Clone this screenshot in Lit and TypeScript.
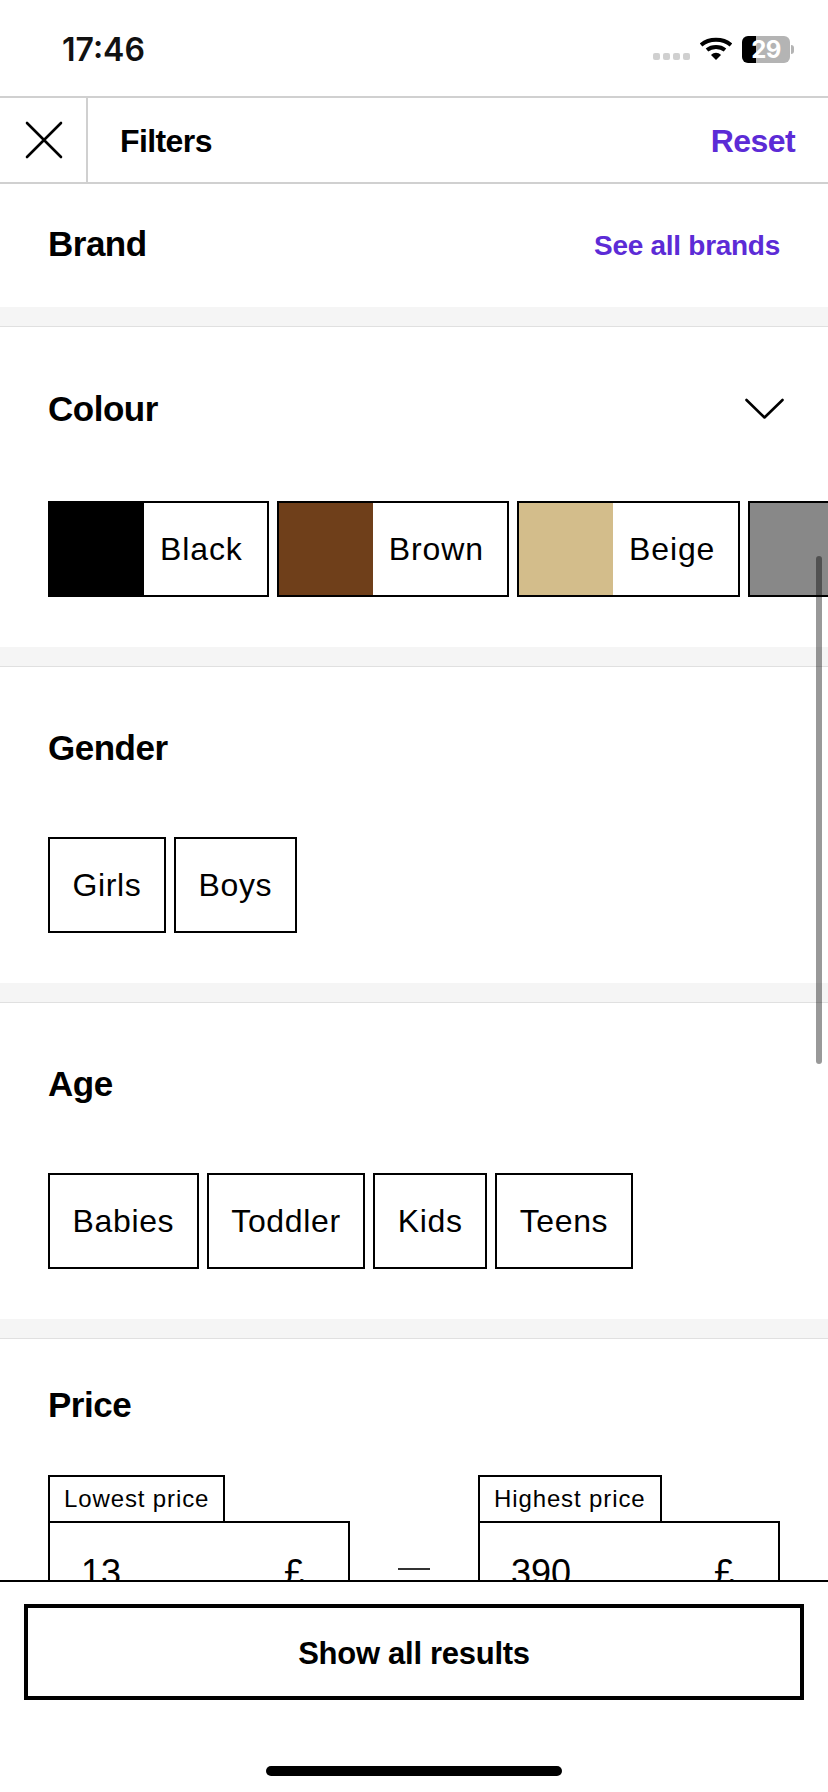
import { LitElement, html, css } from "lit";
import { customElement } from "lit/decorators.js";

const colours = [
  ["Black", "#000000"],
  ["Brown", "#6f3f1a"],
  ["Beige", "#d3bd8b"],
  ["", "#888888"],
];

@customElement("app-root")
export class AppRoot extends LitElement {
  static styles = css`
    :host {
      display: block;
      width: 828px;
      height: 1792px;
      background: #fff;
      color: #000;
      font-family: "Liberation Sans", Arial, sans-serif;
      position: relative;
      overflow: hidden;
    }
    .page { display: flex; flex-direction: column; height: 1792px; }
    .status {
      height: 96px;
      flex: none;
      display: flex;
      align-items: center;
      justify-content: space-between;
      padding: 2px 34px 0 62px;
      box-sizing: border-box;
    }
    .time { font: 600 32px/1 Inter, sans-serif; letter-spacing: 0; color: #111; padding-top: 2px; }
    .status-icons { display: flex; align-items: center; gap: 10px; }
    .sig { display: flex; gap: 3px; margin-top: 14px; margin-left: 1px; }
    .sig i { width: 7px; height: 7px; border-radius: 2px; background: #d0d0d0; display: block; }
    .batt { display: flex; align-items: center; gap: 1px; }
    .batt-body {
      width: 48px; height: 27px; border-radius: 6px; overflow: hidden;
      background: linear-gradient(90deg, #000 0 14px, #b4b4b4 14px);
      color: #fff; font: 700 24px/27px Inter, sans-serif; text-align: center;
      letter-spacing: -0.5px;
    }
    .batt-tip { width: 3px; height: 9px; background: #b4b4b4; border-radius: 0 3px 3px 0; }
    .header {
      height: 88px;
      flex: none;
      box-sizing: border-box;
      border-top: 2px solid #d0d0d0;
      border-bottom: 2px solid #d0d0d0;
      display: flex;
      align-items: center;
    }
    .close {
      width: 88px; height: 100%; box-sizing: border-box;
      border-right: 2px solid #d0d0d0;
      display: flex; align-items: center; justify-content: center;
      padding-left: 2px;
    }
    .title {
      font-size: 32px; font-weight: 700; margin-left: 32px; flex: 1;
      letter-spacing: -0.6px; padding-top: 3px;
    }
    .reset {
      font-size: 32px; font-weight: 700; color: #5c2bd6; margin-right: 33px;
      letter-spacing: -0.6px; padding-top: 3px;
    }
    .scroll { flex: 1; min-height: 0; overflow: hidden; }
    .section { background: #fff; padding: 0 48px; }
    .band { height: 20px; background: #f5f5f5; border-bottom: 1px solid #e0e0e0; box-sizing: border-box; }
    h2 { margin: 0; font-size: 35px; font-weight: 700; letter-spacing: -0.5px; line-height: 40px; }
    .brand {
      height: 123px; display: flex; align-items: center; justify-content: space-between;
      padding-bottom: 4px; box-sizing: border-box;
    }
    .see { font-size: 28px; font-weight: 700; color: #5c2bd6; margin-top: 4px; letter-spacing: -0.28px; }
    .filter { height: 316px; padding-top: 61px; box-sizing: border-box; }
    .filter.colour { height: 320px; padding-top: 62px; }
    .filter.colour .chips { margin-top: 72px; }
    .filter-head { display: flex; align-items: center; justify-content: space-between; height: 40px; }
    .chevron { margin-right: -5px; }
    .chips { display: flex; gap: 8px; margin-top: 69px; margin-right: -48px; }
    .chip {
      height: 96px; box-sizing: border-box; border: 2px solid #000; flex: none;
      display: flex; align-items: center; padding: 1px 22.5px 0; font-size: 32px; letter-spacing: 0.65px;
    }
    .swatch { padding: 1px 23px 0 0; letter-spacing: 0.9px; }
    .swatch .block { width: 94px; height: 92px; margin: -1px 16px 0 0; }
    .swatch.first { padding-right: 24px; }
    .swatch.first .block { margin-left: -2px; width: 96px; height: 96px; }
    .price { padding-top: 46px; }
    .price-row { display: flex; align-items: flex-start; margin-top: 50px; }
    .field { width: 302px; flex: none; display: flex; flex-direction: column; align-items: flex-start; }
    .label {
      height: 46px; box-sizing: border-box; border: 2px solid #000; border-bottom: none;
      display: flex; align-items: center; padding: 0 14px; font-size: 24px; letter-spacing: 0.88px;
    }
    .input {
      width: 100%; height: 96px; box-sizing: border-box; border: 2px solid #000;
      display: flex; align-items: center; justify-content: space-between;
      padding: 8px 44px 0 31px; font-size: 36px;
    }
    .dash { width: 32px; height: 2px; background: #333; margin: 93px 48px 0; flex: none; }
    .footer {
      height: 212px; flex: none; box-sizing: border-box;
      border-top: 2px solid #000; background: #fff;
      padding: 22px 24px 0;
      position: relative;
    }
    .cta {
      height: 96px; box-sizing: border-box; border: 4px solid #000;
      display: flex; align-items: center; justify-content: center;
      font-size: 31px; font-weight: 700; letter-spacing: -0.28px; padding-top: 4px;
    }
    .home {
      position: absolute; left: 266px; top: 184px; width: 296px; height: 10px;
      border-radius: 5px; background: #000;
    }
    .scrollbar {
      position: absolute; left: 816px; top: 556px; width: 6px; height: 508px;
      border-radius: 3px; background: rgba(0, 0, 0, 0.4);
    }
  `;

  private chips(items: string[]) {
    return html`<div class="chips">${items.map((t) => html`<div class="chip">${t}</div>`)}</div>`;
  }

  render() {
    return html`
      <div class="page">
        <div class="status">
          <span class="time">17:46</span>
          <div class="status-icons">
            <div class="sig"><i></i><i></i><i></i><i></i></div>
            <svg width="32" height="24" viewBox="0 0 32 24">
              <path d="M1 8 C 9 1, 23 1, 31 8" fill="none" stroke="#000" stroke-width="4"/>
              <path d="M7 13 C 12 9, 20 9, 25 13" fill="none" stroke="#000" stroke-width="4"/>
              <path d="M11 18 L16 23 L21 18 C 18 15, 14 15, 11 18 Z" fill="#000"/>
            </svg>
            <div class="batt"><div class="batt-body">29</div><div class="batt-tip"></div></div>
          </div>
        </div>
        <div class="header">
          <div class="close">
            <svg width="38" height="38" viewBox="0 0 38 38">
              <path d="M2 2 L36 36 M36 2 L2 36" stroke="#000" stroke-width="2.6" stroke-linecap="round"/>
            </svg>
          </div>
          <div class="title">Filters</div>
          <div class="reset">Reset</div>
        </div>
        <div class="scroll">
          <div class="section brand"><h2>Brand</h2><span class="see">See all brands</span></div>
          <div class="band"></div>
          <div class="section filter colour">
            <div class="filter-head">
              <h2>Colour</h2>
              <svg class="chevron" width="40" height="22" viewBox="0 0 40 22">
                <path d="M1.5 2 L19.5 19.5 L37.5 2" fill="none" stroke="#000" stroke-width="2.6" stroke-linecap="round" stroke-linejoin="round"/>
              </svg>
            </div>
            <div class="chips">
              ${colours.map(
                ([name, c], i) => html`<div class="chip swatch ${i === 0 ? "first" : ""}">
                  <div class="block" style="background:${c}"></div>${name}
                </div>`
              )}
            </div>
          </div>
          <div class="band"></div>
          <div class="section filter">
            <div class="filter-head"><h2>Gender</h2></div>
            ${this.chips(["Girls", "Boys"])}
          </div>
          <div class="band"></div>
          <div class="section filter">
            <div class="filter-head"><h2>Age</h2></div>
            ${this.chips(["Babies", "Toddler", "Kids", "Teens"])}
          </div>
          <div class="band"></div>
          <div class="section price">
            <h2>Price</h2>
            <div class="price-row">
              <div class="field">
                <div class="label">Lowest price</div>
                <div class="input"><span>13</span><span>£</span></div>
              </div>
              <div class="dash"></div>
              <div class="field">
                <div class="label">Highest price</div>
                <div class="input"><span>390</span><span>£</span></div>
              </div>
            </div>
          </div>
        </div>
        <div class="footer">
          <div class="cta">Show all results</div>
          <div class="home"></div>
        </div>
      </div>
      <div class="scrollbar"></div>
    `;
  }
}
